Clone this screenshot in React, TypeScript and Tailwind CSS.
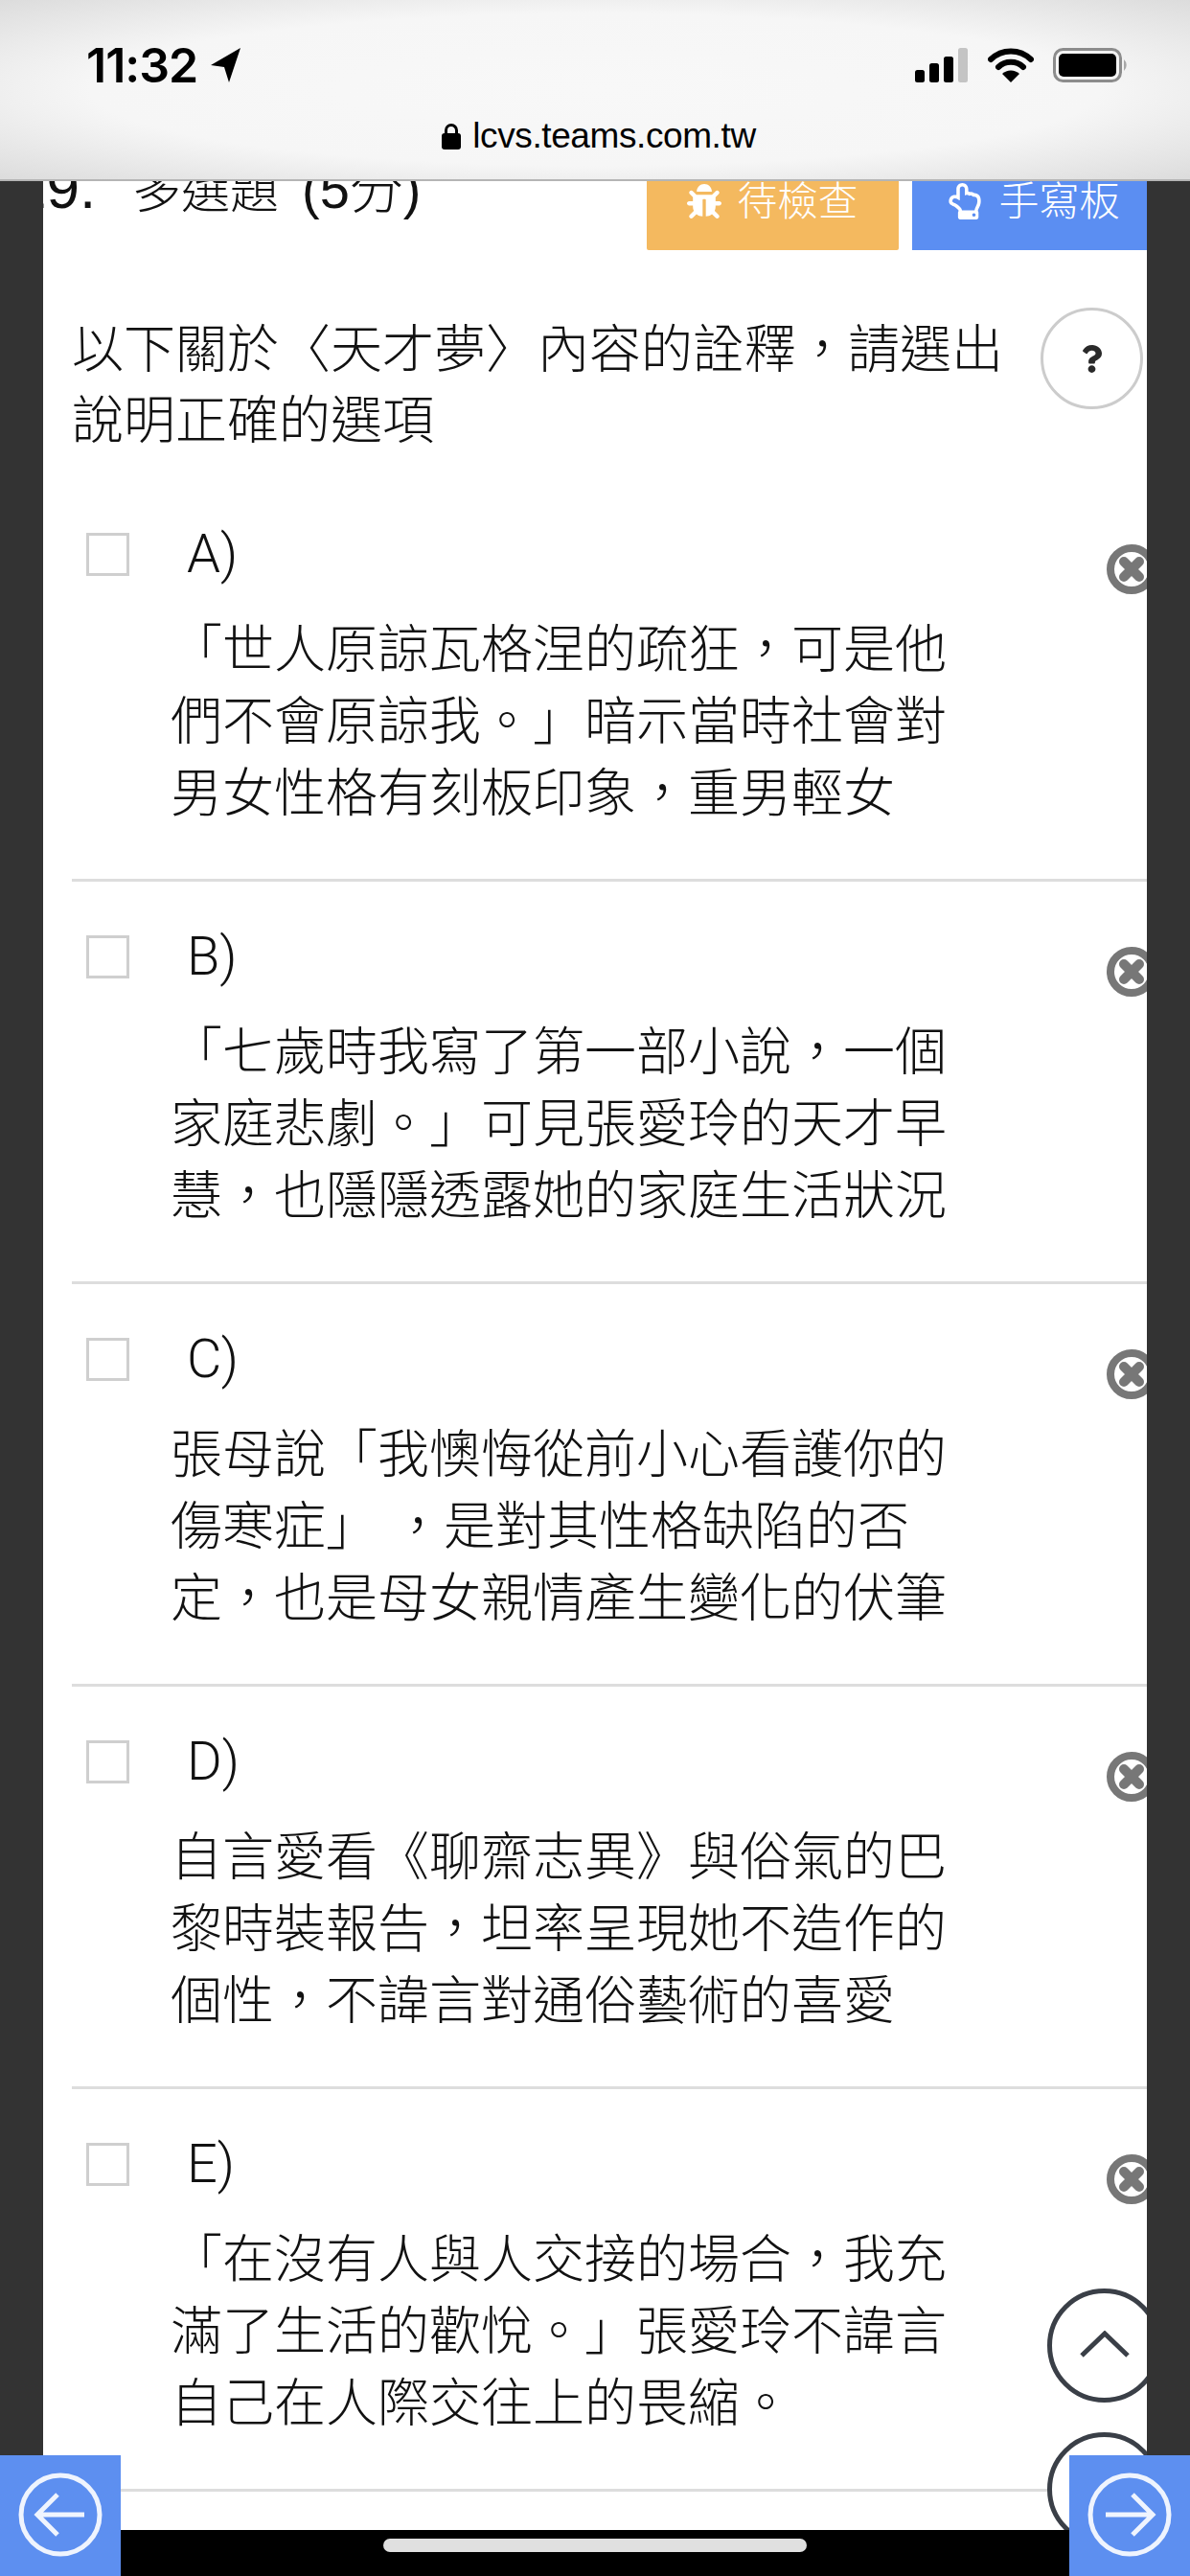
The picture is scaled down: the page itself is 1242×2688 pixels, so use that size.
import { FaBug, FaRegHandPointUp, FaQuestion } from "react-icons/fa";

const question = "以下關於〈天才夢〉內容的詮釋\uFF0C請選出說明正確的選項";

const options = [
  { label: "A)", text: "「世人原諒瓦格涅的疏狂\uFF0C可是他們不會原諒我。」暗示當時社會對男女性格有刻板印象\uFF0C重男輕女" },
  { label: "B)", text: "「七歲時我寫了第一部小說\uFF0C一個家庭悲劇。」可見張愛玲的天才早慧\uFF0C也隱隱透露她的家庭生活狀況" },
  { label: "C)", text: "張母說「我懊悔從前小心看護你的傷寒症」\u00A0\uFF0C是對其性格缺陷的否定\uFF0C也是母女親情產生變化的伏筆" },
  { label: "D)", text: "自言愛看《聊齋志異》與俗氣的巴黎時裝報告\uFF0C坦率呈現她不造作的個性\uFF0C不諱言對通俗藝術的喜愛" },
  { label: "E)", text: "「在沒有人與人交接的場合\uFF0C我充滿了生活的歡悅。」張愛玲不諱言自己在人際交往上的畏縮。" },
];

function RemoveIcon() {
  return (
    <svg width="52" height="52" viewBox="0 0 52 52" className="absolute right-[-10px] top-[68px]">
      <circle cx="26" cy="26" r="22" fill="white" stroke="#777" strokeWidth="8" />
      <path d="M18 18 L34 34 M34 18 L18 34" stroke="#777" strokeWidth="10" strokeLinecap="round" />
    </svg>
  );
}

function StatusIcons() {
  return (
    <div className="flex items-center gap-[20px]">
      <svg width="56" height="36" viewBox="0 0 56 36">
        <rect x="0" y="23" width="10" height="13" rx="2.5" fill="#000" />
        <rect x="15" y="16" width="10" height="20" rx="2.5" fill="#000" />
        <rect x="30" y="9" width="10" height="27" rx="2.5" fill="#000" />
        <rect x="45" y="0" width="10" height="36" rx="2.5" fill="#c4c4c4" />
      </svg>
      <svg width="48" height="36" viewBox="0 0 48 36">
        <path d="M3 12 A30 30 0 0 1 45 12" fill="none" stroke="#000" strokeWidth="6" strokeLinecap="round" />
        <path d="M11 20 A19 19 0 0 1 37 20" fill="none" stroke="#000" strokeWidth="6" strokeLinecap="round" />
        <path d="M24 36 L15 27 A13 13 0 0 1 33 27 Z" fill="#000" />
      </svg>
      <svg width="78" height="36" viewBox="0 0 78 36">
        <rect x="1.5" y="1.5" width="69" height="33" rx="9" fill="none" stroke="#8c8c8c" strokeWidth="3" />
        <rect x="6" y="6" width="60" height="24" rx="5" fill="#000" />
        <path d="M74 12 A8 8 0 0 1 74 24 Z" fill="#a8a8a8" />
      </svg>
    </div>
  );
}

function ArrowButton({ direction }: { direction: "left" | "right" }) {
  return (
    <div className="flex h-[126px] w-[126px] items-center justify-center bg-[#5d8ff0]">
      <svg width="90" height="90" viewBox="0 0 90 90" className="-mt-[2px]">
        <circle cx="45" cy="45" r="41" fill="none" stroke="#fff" strokeOpacity="0.9" strokeWidth="5" />
        {direction === "left" ? (
          <path d="M70 45 H22 M42 24 L21 45 L42 66" fill="none" stroke="#fff" strokeOpacity="0.9" strokeWidth="5" />
        ) : (
          <path d="M20 45 H68 M48 24 L69 45 L48 66" fill="none" stroke="#fff" strokeOpacity="0.9" strokeWidth="5" />
        )}
      </svg>
    </div>
  );
}

export default function App() {
  return (
    <div className="relative h-[2688px] w-[1242px] overflow-hidden bg-[#333333] font-['Liberation_Sans','Noto_Sans_CJK_TC',sans-serif] text-[#111]">
      {/* browser chrome */}
      <div className="relative z-20 h-[189px] border-b-2 border-[#b5b5b5] bg-[radial-gradient(ellipse_at_center,#f8f8f8_0%,#f6f6f6_60%,#dcdcdc_100%)] text-black">
        <div className="flex items-center justify-between pl-[90px] pr-[65px] pt-[50px]">
          <div className="flex items-center gap-[14px]">
            <span className="font-['Inter',sans-serif] text-[50px] font-semibold leading-[36px] tracking-[-1px]">11:32</span>
            <svg width="32" height="36" viewBox="0 0 32 36">
              <path d="M31 0 L0 18 L14 20 L19 36 Z" fill="#000" />
            </svg>
          </div>
          <StatusIcons />
        </div>
        <div className="mt-[36px] flex items-center justify-center gap-[12px] pl-[8px]">
          <svg width="20" height="28" viewBox="0 0 20 28">
            <rect x="0" y="11" width="20" height="17" rx="3" fill="#000" />
            <path d="M4.5 12 V8 A5.5 5.5 0 0 1 15.5 8 V12" fill="none" stroke="#000" strokeWidth="3" />
          </svg>
          <span className="text-[37px] leading-[40px] tracking-[-0.4px]">lcvs.teams.com.tw</span>
        </div>
      </div>

      {/* question card */}
      <div className="relative mx-[45px] h-[2451px] overflow-hidden bg-white">
        <div className="-mt-[30px] flex items-start justify-between">
          <div className="-ml-[31px] flex items-baseline whitespace-nowrap pt-[7px]">
            <span className="w-[124px] text-[62px] leading-[60px]">19.</span>
            <span className="text-[51px] font-light leading-[60px]">多選題</span>
            <span className="ml-[24px] text-[56px] font-light leading-[60px]">(5分)</span>
          </div>
          <div className="flex gap-[14px]">
            <div className="flex h-[102px] w-[263px] items-center justify-center gap-[16px] rounded-b-[2px] bg-[#f4b95f] text-[42px] font-light text-white">
              <FaBug className="text-[36px]" />
              待檢查
            </div>
            <div className="flex h-[102px] w-[245px] items-center justify-center gap-[16px] bg-[#5b8ef2] pl-[8px] text-[42px] font-light text-white">
              <FaRegHandPointUp className="text-[38px]" />
              手寫板
            </div>
          </div>
        </div>

        <div className="flex items-start justify-between pl-[30px] pr-[4px] pt-[67px]">
          <p className="w-[980px] text-[54px] font-light leading-[74px]">{question}</p>
          <div className="-mt-[7px] flex h-[106px] w-[107px] shrink-0 items-center justify-center rounded-full border-[3px] border-[#cccccc] text-[#2a2a2a]">
            <FaQuestion className="text-[29px]" />
          </div>
        </div>

        <div className="ml-[30px] mt-[24px]">
          {options.map((option) => (
            <div key={option.label} className="relative h-[420px] border-b-[3px] border-[#dddddd] pt-[48px]">
              <div className="flex items-center">
                <div className="ml-[15px] h-[45px] w-[45px] border-[3px] border-[#cfcfcf] bg-white" />
                <span className="ml-[60px] font-['Roboto',sans-serif] text-[56px] font-light leading-[60px] text-[#111]">{option.label}</span>
              </div>
              <p className="ml-[103px] mt-[33px] w-[815px] text-[54px] font-light leading-[75px]">{option.text}</p>
              <RemoveIcon />
            </div>
          ))}
        </div>

        {/* floating scroll buttons */}
        <div className="absolute left-[1048px] top-[2199px] flex h-[119px] w-[119px] items-center justify-center rounded-full border-[5px] border-[#3a3f47] bg-white">
          <svg width="52" height="28" viewBox="0 0 52 28" className="-mt-[4px]">
            <path d="M2 26 L26 3 L50 26" fill="none" stroke="#3a3f47" strokeWidth="5" />
          </svg>
        </div>
        <div className="absolute left-[1048px] top-[2349px] h-[119px] w-[119px] rounded-full border-[5px] border-[#3a3f47] bg-white" />
      </div>

      {/* bottom bar */}
      <div className="absolute inset-x-0 bottom-0 z-10 flex h-[126px] items-end justify-between">
        <ArrowButton direction="left" />
        <div className="flex h-[48px] flex-1 justify-center bg-black pt-[9px]">
          <div className="h-[14px] w-[442px] rounded-full bg-[#e0e0e0]" />
        </div>
        <ArrowButton direction="right" />
      </div>
    </div>
  );
}
